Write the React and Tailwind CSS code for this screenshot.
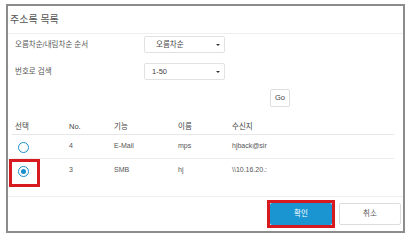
const FONT = { fontFamily: '"Liberation Sans", "Noto Sans CJK KR", sans-serif' };

const ROWS = [
  { no: '4', fn: 'E-Mail', name: 'mps', dest: 'hjback@sir', checked: false },
  { no: '3', fn: 'SMB', name: 'hj', dest: '\\\\10.16.20.:', checked: true },
];

function Radio({ checked }) {
  return (
    <span className="w-[11px] h-[11px] rounded-full border-[1.5px] border-[#1b8fcc] bg-white flex items-center justify-center">
      {checked && <span className="w-[5px] h-[5px] rounded-full bg-[#1b8fcc]" />}
    </span>
  );
}

function Select({ value, pad }) {
  return (
    <div className={`w-[81px] h-[17px] border border-[#e2e2e2] rounded-[2px] bg-white flex items-center justify-between pr-[4px] ${pad}`}>
      <span className="text-[7.5px] text-[#444]">{value}</span>
      <span className="w-0 h-0 border-l-[2px] border-r-[2px] border-t-[2.5px] border-l-transparent border-r-transparent border-t-[#333]" />
    </div>
  );
}

export default function App() {
  return (
    <div className="w-[409px] h-[237px] bg-white pl-[6px] pt-[4px]" style={FONT}>
      <div className="w-[399px] h-[229px] border-2 border-[#8c8c8c] flex flex-col">
        <div className="h-[28px] flex items-center pl-[2px] border-b border-[#eeeeee] text-[10px] text-[#555]">
          주소록 목록
        </div>

        <div className="flex flex-col pl-[7px] text-[7.5px] text-[#555]">
          <div className="flex items-center h-[17px] mt-[2px]">
            <span className="w-[129px]">오름차순/내림차순 순서</span>
            <Select value="오름차순" pad="pl-[11px]" />
          </div>
          <div className="flex items-center h-[17px] mt-[10px]">
            <span className="w-[129px]">번호로 검색</span>
            <Select value="1-50" pad="pl-[7px]" />
          </div>
          <div className="flex h-[18px] mt-[9px] pl-[255px]">
            <div className="w-[20px] h-[18px] border border-[#dddddd] rounded-[2px] flex items-center justify-center text-[7.5px] text-[#444]">
              Go
            </div>
          </div>
        </div>

        <div className="ml-[4px] w-[382px] mt-[13px] text-[7px] text-[#555]">
          <div className="grid grid-cols-[54px_45px_64px_54px_1fr] pl-[3px] h-[15px] items-center border-b border-[#e8e8e8] text-[#444] text-[7.5px]">
            <span>선택</span>
            <span>No.</span>
            <span>기능</span>
            <span>이름</span>
            <span>수신지</span>
          </div>
          {ROWS.map((r, i) => (
            <div
              key={r.no}
              className={`grid grid-cols-[54px_45px_64px_54px_1fr] pl-[3px] h-[24px] items-start pt-[6px] ${i === 0 ? 'border-b border-[#ececec]' : ''}`}
            >
              <span className="relative pl-[3px] pt-[1px]">
                {r.checked && (
                  <span className="absolute left-[-6px] top-[-6px] w-[31px] h-[28px] border-[3px] border-[#d71a1f]" />
                )}
                <Radio checked={r.checked} />
              </span>
              <span>{r.no}</span>
              <span>{r.fn}</span>
              <span>{r.name}</span>
              <span>{r.dest}</span>
            </div>
          ))}
        </div>

        <div className="mt-auto h-[35px] border-t border-[#eeeeee] flex items-center justify-end gap-[7px] pr-[2px]">
          <div className="relative">
            <span className="absolute -left-[3px] -top-[3px] -right-[3px] -bottom-[3px] border-[3px] border-[#d71a1f]" />
            <div className="w-[62px] h-[22px] bg-[#1a95d2] rounded-[2px] flex items-center justify-center text-[7.5px] text-white">
              확인
            </div>
          </div>
          <div className="w-[62px] h-[22px] bg-white border border-[#dcdcdc] rounded-[2px] flex items-center justify-center text-[7.5px] text-[#555]">
            취소
          </div>
        </div>
      </div>
    </div>
  );
}
